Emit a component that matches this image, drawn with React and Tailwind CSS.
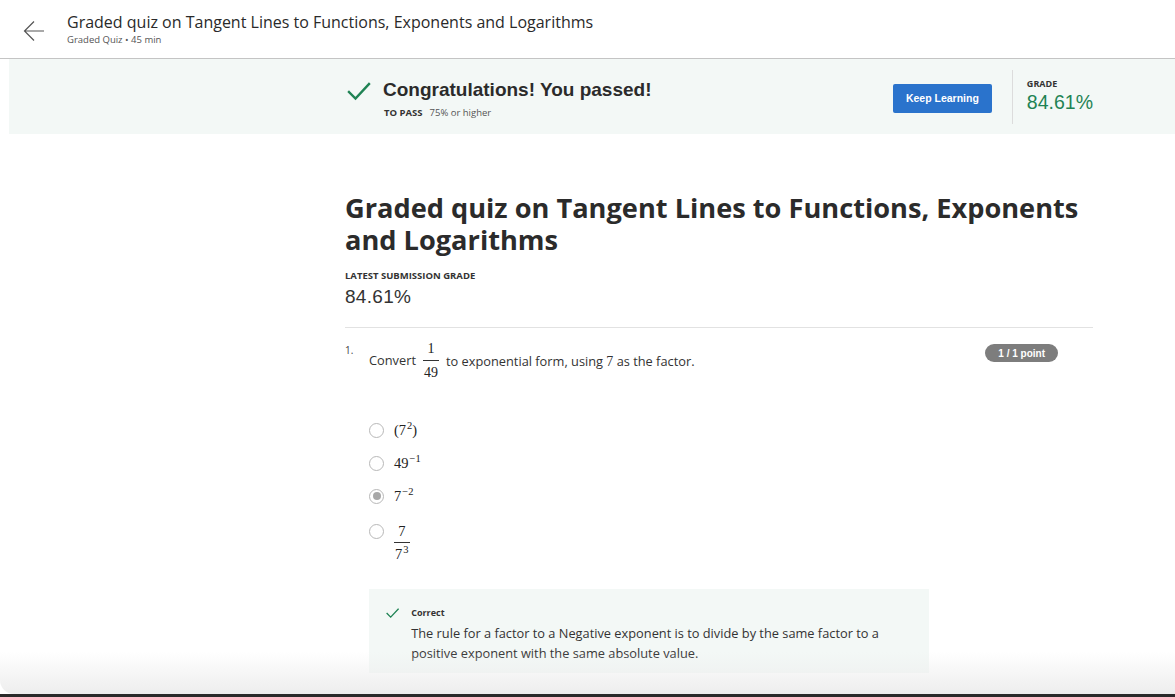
import React from "react";

const sans = { fontFamily: '"Open Sans", "Noto Sans", sans-serif' };

function CheckIcon({ className }) {
  return (
    <svg viewBox="0 0 24 24" className={className} fill="none" stroke="#1f8354" strokeWidth="2.4" strokeLinecap="square">
      <path d="M2 13 L8.5 19.5 L22 5" />
    </svg>
  );
}

function Radio({ checked }) {
  return (
    <span className="flex h-[15px] w-[15px] shrink-0 items-center justify-center rounded-full border-[1.5px] border-[#b8b8b8] bg-white">
      {checked && <span className="h-[8px] w-[8px] rounded-full bg-[#a8a8a8]" />}
    </span>
  );
}

function Sup({ children }) {
  return <sup className="relative top-[-6px] ml-[1px] text-[10.5px]">{children}</sup>;
}

const options = [
  { id: 1, label: <span>(7<Sup>2</Sup>)</span> },
  { id: 2, label: <span>49<Sup>−1</Sup></span> },
  { id: 3, label: <span>7<Sup>−2</Sup></span>, checked: true },
];

export default function App() {
  return (
    <div className="relative h-[697px] w-[1175px] overflow-hidden bg-white text-[#333]" style={sans}>
      {/* top bar */}
      <header className="flex h-[59px] items-start border-b border-[#c4c4c4]">
        <div className="flex w-[67px] justify-center pt-[20px]">
          <svg width="22" height="22" viewBox="0 0 22 22" fill="none" stroke="#555" strokeWidth="1.2">
            <path d="M21 11H1.5 M11 1.5 L1.5 11 L11 20.5" />
          </svg>
        </div>
        <div className="pt-[11px]">
          <div className="text-[16px] leading-[22px] text-[#2a2a2a]">
            Graded quiz on Tangent Lines to Functions, Exponents and Logarithms
          </div>
          <div className="text-[9.5px] leading-[14px] text-[#555]">Graded Quiz • 45 min</div>
        </div>
      </header>

      {/* pass banner */}
      <div className="ml-[9px] flex h-[75px] items-center bg-[#f3f8f6]">
        <div className="ml-[336px] flex w-[748px] items-center">
          <CheckIcon className="ml-[2px] mt-[-12px] h-[24px] w-[24px]" />
          <div className="ml-[12px] mt-[3px] flex-1">
            <div className="font-['Liberation_Sans',Arial,sans-serif] text-[19px] font-bold leading-[26px] text-[#2b2b2b]">
              Congratulations! You passed!
            </div>
            <div className="mt-[3px] pl-[1px] text-[9.5px] leading-[14px] text-[#555]">
              <span className="mr-[7px] text-[9.5px] font-bold text-[#333]">TO PASS</span>75% or higher
            </div>
          </div>
          <button className="mr-[20px] mt-[4px] h-[29px] w-[99px] rounded-[2px] bg-[#2a73cc] font-['Liberation_Sans',Arial,sans-serif] text-[10.5px] font-bold text-white">
            Keep Learning
          </button>
          <div className="h-[54px] w-px bg-[#dcdcdc]" />
          <div className="ml-[14px] pb-[4px]">
            <div className="text-[9px] font-bold leading-[14px] text-[#333]">GRADE</div>
            <div className="font-['Liberation_Sans',Arial,sans-serif] text-[19.5px] leading-[22px] text-[#1f8354]">
              84.61%
            </div>
          </div>
        </div>
      </div>

      {/* main column */}
      <main className="ml-[345px] w-[748px] pt-[58px]">
        <h1 className="text-[27.2px] font-bold leading-[32px] text-[#2b2b2b]">
          Graded quiz on Tangent Lines to Functions, Exponents and Logarithms
        </h1>
        <div className="mt-[13px] text-[9.5px] font-bold leading-[14px] text-[#333]">LATEST SUBMISSION GRADE</div>
        <div className="mt-[2px] font-['Liberation_Sans',Arial,sans-serif] text-[19px] leading-[24px] tracking-[0.3px] text-[#333]">
          84.61%
        </div>
        <div className="mt-[18px] h-px bg-[#e2e2e2]" />

        <section className="mt-[14px] flex">
          <div className="mt-[1px] w-[24px] text-[10px] leading-[14px] text-[#444]">1.</div>
          <div className="flex-1">
            <div className="flex items-center text-[12.8px] text-[#333]">
              <span>Convert</span>
              <span className="mx-[7px] inline-flex flex-col items-center font-['Liberation_Serif',serif] text-[14px] leading-[14px] text-[#222]">
                <span className="px-[1px]">1</span>
                <span className="mt-[4px] mb-[5px] h-px w-full bg-[#333]" />
                <span className="px-[1px]">49</span>
              </span>
              <span>
                to exponential form, using <span className="font-['Liberation_Serif',serif] text-[14px]">7</span> as the factor.
              </span>
            </div>

            <div className="mt-[41px] flex flex-col gap-[15px]">
              {options.map((o) => (
                <label key={o.id} className="flex h-[18px] items-center gap-[10px]">
                  <Radio checked={o.checked} />
                  <span className="font-['Liberation_Serif',serif] text-[14.5px] leading-[18px] text-[#222]">{o.label}</span>
                </label>
              ))}
              <label className="mt-[3px] flex items-start gap-[10px]">
                <span className="mt-[1px]">
                  <Radio />
                </span>
                <span className="inline-flex flex-col items-center font-['Liberation_Serif',serif] text-[14.5px] leading-[16px] text-[#222]">
                  <span className="px-[1px]">7</span>
                  <span className="mt-[3px] mb-[3px] h-px w-full bg-[#333]" />
                  <span className="px-[1px]">7<Sup>3</Sup></span>
                </span>
              </label>
            </div>

            <div className="mt-[27px] w-[560px] bg-[#f3f8f6] px-[17px] pt-[17px] pb-[10px]">
              <div className="flex items-start">
                <CheckIcon className="mt-[-3px] h-[20px] w-[20px]" />
                <div className="ml-[12px]">
                  <div className="text-[9px] font-bold leading-[14px] text-[#333]">Correct</div>
                  <p className="mt-[3px] text-[12.8px] leading-[20px] text-[#333]">
                    The rule for a factor to a Negative exponent is to divide by the same factor to a positive exponent with the same absolute value.
                  </p>
                </div>
              </div>
            </div>
          </div>
          <div className="mr-[35px] mt-[2px]">
            <span className="flex h-[18px] items-center rounded-full bg-[#7d7d7d] px-[13px] font-['Liberation_Sans',Arial,sans-serif] text-[10px] font-bold text-white">
              1 / 1 point
            </span>
          </div>
        </section>
      </main>

      {/* window edge shadow */}
      <div className="pointer-events-none absolute inset-x-0 bottom-[3px] h-[42px] rounded-bl-[14px] bg-gradient-to-b from-transparent to-[#ededed]" />
      <div className="absolute inset-x-0 bottom-0 h-[3px] bg-[#2a2a2a]" />
    </div>
  );
}
